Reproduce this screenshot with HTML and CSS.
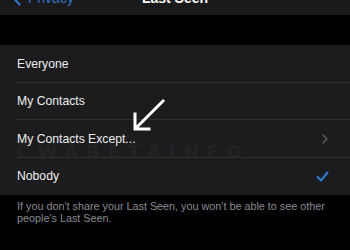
FILE: index.html
```html
<!DOCTYPE html>
<html>
<head>
<meta charset="utf-8">
<link rel="stylesheet" href="styles.css">
</head>
<body>
<div class="screen">
  <div class="nav">
    <div class="nav-inner">
      <div class="back">
        <svg class="back-chev" width="9" height="16" viewBox="0 0 9 16"><path d="M7.5 1.5 L1.5 8 L7.5 14.5" fill="none" stroke="#2f74c4" stroke-width="2.2" stroke-linecap="round" stroke-linejoin="round"/></svg>
        <span>Privacy</span>
      </div>
      <div class="title">Last Seen</div>
    </div>
  </div>
  <div class="gap"></div>
  <div class="list">
    <div class="row"><span class="label">Everyone</span></div>
    <div class="row"><span class="label">My Contacts</span></div>
    <div class="row">
      <span class="watermark" aria-hidden="true">CWABETAINFO</span>
      <span class="label">My Contacts Except...</span>
      <svg class="chev" width="6" height="10" viewBox="0 0 6 10"><path d="M1 1 L5 5 L1 9" fill="none" stroke="#5a5a5f" stroke-width="1.5" stroke-linecap="round" stroke-linejoin="round"/></svg>
    </div>
    <div class="row last">
      <span class="label">Nobody</span>
      <svg class="check" width="13" height="11" viewBox="0 0 13 11"><path d="M1.5 6 L5 9.5 L11.5 1.5" fill="none" stroke="#2f7bd6" stroke-width="2" stroke-linecap="round" stroke-linejoin="round"/></svg>
    </div>
  </div>
  <div class="footer">If you don't share your Last Seen, you won't be able to see other people's Last Seen.</div>
  <svg class="arrow" width="40" height="36" viewBox="0 0 40 36"><path d="M34 3 L7 30 M6 16 L6 31 L20 31" fill="none" stroke="#ffffff" stroke-width="3" stroke-linecap="square"/></svg>
</div>
</body>
</html>
```

FILE: styles.css
```css
* { box-sizing: border-box; }
html, body { margin: 0; padding: 0; background: #000; }
body { font-family: "Liberation Sans", Arial, sans-serif; -webkit-font-smoothing: antialiased; }
.screen { position: relative; width: 350px; height: 250px; overflow: hidden; background: #000; }
.nav { height: 15px; background: #1a1a1a; overflow: hidden; }
.nav-inner { position: relative; margin-top: -12px; height: 20px; line-height: 20px; display: flex; align-items: center; }
.back { display: flex; align-items: center; color: #2f74c4; font-size: 14px; padding-left: 12px; gap: 7px; }
.back-chev { display: block; }
.title { position: absolute; left: 0; right: 0; text-align: center; color: #fff; font-size: 14px; font-weight: 600; }
.gap { height: 30px; }
.list { background: #1c1c1e; }
.row { position: relative; height: 37.5px; display: flex; align-items: center; padding: 0 22px 0 17px; }
.row::after { content: ""; position: absolute; left: 16px; right: 0; bottom: 0; height: 1px; background: #2e2e31; }
.row.last::after { display: none; }
.label { color: #ececec; font-size: 12.2px; flex: 1; position: relative; z-index: 1; }
.chev { display: block; }
.check { display: block; margin-right: -1px; }
.watermark { position: absolute; left: 16px; top: 23px; font-size: 18px; font-weight: 700; letter-spacing: 8px; color: rgba(255,255,255,0.045); font-family: "DejaVu Sans", sans-serif; line-height: 18px; }
.footer { color: #8b8b90; font-size: 10.8px; line-height: 11.5px; padding: 6px 16px 0 17px; }
.arrow { position: absolute; left: 129px; top: 98px; }
```
